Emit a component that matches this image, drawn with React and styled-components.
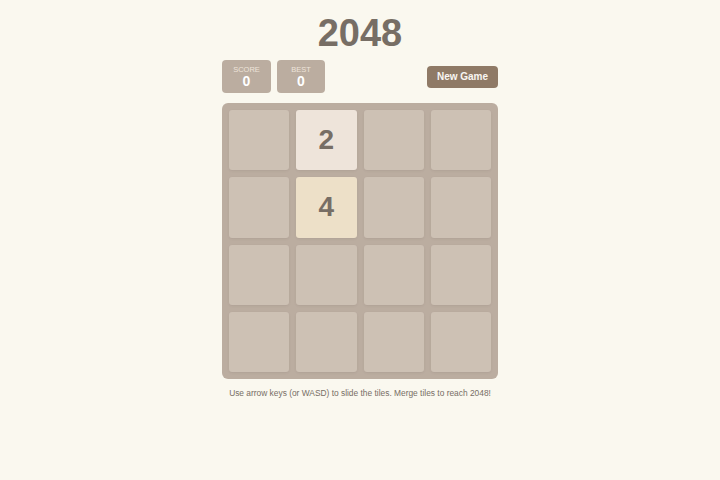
import React from "react";
import styled, { createGlobalStyle } from "styled-components";

const Global = createGlobalStyle`
  html, body { margin: 0; padding: 0; background: #faf8ef; }
  body { font-family: "Liberation Sans", Arial, sans-serif; color: #776e65; }
`;

const Page = styled.div`
  display: flex;
  justify-content: center;
  padding-top: 14px;
`;

const Wrap = styled.div`
  width: 276px;
  display: flex;
  flex-direction: column;
`;

const Title = styled.h1`
  margin: 0;
  font-size: 38px;
  line-height: 38px;
  font-weight: 700;
  text-align: center;
  color: #776e65;
`;

const Bar = styled.div`
  margin-top: 8px;
  display: flex;
  align-items: center;
  justify-content: space-between;
`;

const Scores = styled.div`
  display: flex;
  gap: 6px;
`;

const ScoreBox = styled.div`
  width: ${(p) => p.$w}px;
  height: 33px;
  box-sizing: border-box;
  background: #bbada0;
  border-radius: 4px;
  display: flex;
  flex-direction: column;
  align-items: center;
  justify-content: center;
  padding-top: 1px;
`;

const Label = styled.div`
  font-size: 7.5px;
  line-height: 9px;
  color: #eee4da;
  text-transform: uppercase;
`;

const Value = styled.div`
  font-size: 14px;
  line-height: 15px;
  font-weight: 700;
  color: #ffffff;
`;

const Button = styled.button`
  width: 71px;
  height: 22px;
  border: none;
  border-radius: 4px;
  background: #8f7a66;
  color: #f9f6f2;
  font-family: "Liberation Sans", Arial, sans-serif;
  font-size: 10px;
  font-weight: 700;
  padding: 0;
  cursor: pointer;
`;

const Board = styled.div`
  margin-top: 10px;
  width: 276px;
  height: 276px;
  box-sizing: border-box;
  padding: 7px;
  background: #bbada0;
  border-radius: 6px;
  display: grid;
  grid-template-columns: repeat(4, 1fr);
  grid-template-rows: repeat(4, 1fr);
  gap: 7px;
`;

const tileColors = {
  0: "#cdc1b4",
  2: "#eee4da",
  4: "#ede0c8",
};

const Tile = styled.div`
  border-radius: 3px;
  background: ${(p) => tileColors[p.$v]};
  box-shadow: 0 1px 2px rgba(119, 110, 101, 0.15);
  display: flex;
  align-items: center;
  justify-content: center;
  font-size: 28px;
  font-weight: 700;
  color: #776e65;
`;

const Hint = styled.p`
  margin: 8px -40px 0;
  font-size: 8.4px;
  line-height: 12px;
  text-align: center;
  color: #776e65;
  white-space: nowrap;
`;

const grid = [
  [0, 2, 0, 0],
  [0, 4, 0, 0],
  [0, 0, 0, 0],
  [0, 0, 0, 0],
];

export default function App() {
  return (
    <>
      <Global />
      <Page>
        <Wrap>
          <Title>2048</Title>
          <Bar>
            <Scores>
              <ScoreBox $w={49}>
                <Label>Score</Label>
                <Value>0</Value>
              </ScoreBox>
              <ScoreBox $w={48}>
                <Label>Best</Label>
                <Value>0</Value>
              </ScoreBox>
            </Scores>
            <Button>New Game</Button>
          </Bar>
          <Board>
            {grid.flat().map((v, i) => (
              <Tile key={i} $v={v}>
                {v ? v : ""}
              </Tile>
            ))}
          </Board>
          <Hint>Use arrow keys (or WASD) to slide the tiles. Merge tiles to reach 2048!</Hint>
        </Wrap>
      </Page>
    </>
  );
}
